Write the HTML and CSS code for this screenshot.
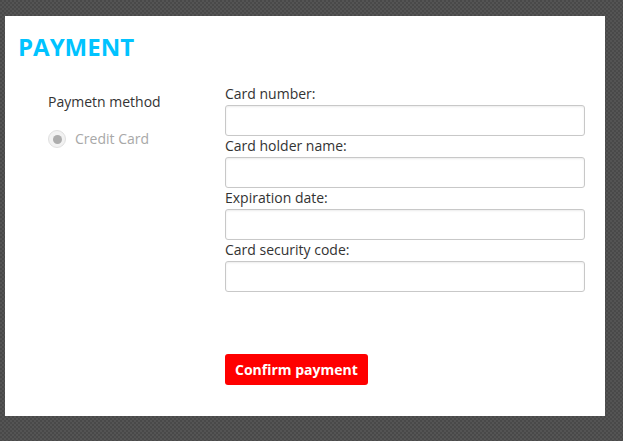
FILE: index.html
```html
<!DOCTYPE html>
<html>
<head>
<meta charset="utf-8">
<link rel="stylesheet" href="styles.css">
</head>
<body>
<div class="panel">
  <h1 class="title">PAYMENT</h1>
  <div class="content">
    <div class="method">
      <div class="method-label">Paymetn method</div>
      <label class="radio-row">
        <span class="radio"><span class="radio-dot"></span></span>
        <span class="radio-text">Credit Card</span>
      </label>
    </div>
    <div class="form">
      <label class="field-label">Card number:</label>
      <div class="input"></div>
      <label class="field-label">Card holder name:</label>
      <div class="input"></div>
      <label class="field-label">Expiration date:</label>
      <div class="input"></div>
      <label class="field-label">Card security code:</label>
      <div class="input"></div>
      <button class="confirm">Confirm payment</button>
    </div>
  </div>
</div>
</body>
</html>
```
FILE: styles.css
```css
html, body {
  margin: 0;
  padding: 0;
}
body {
  width: 623px;
  height: 441px;
  background-color: #4f4f4f;
  background-image: repeating-conic-gradient(#545454 0 25%, #494949 0 50%);
  background-size: 4px 4px;
  font-family: "Open Sans", "Noto Sans", sans-serif;
  padding: 16px 0 0 5px;
  box-sizing: border-box;
}
.panel {
  width: 600px;
  height: 400px;
  background: #fff;
  box-sizing: border-box;
  padding: 15px 0 0 13px;
}
.title {
  margin: 0;
  font-size: 24px;
  line-height: 32px;
  font-weight: 700;
  color: #00c3ff;
}
.content {
  display: flex;
  margin-top: 33px;
  margin-left: 2px;
}
.method {
  width: 205px;
  padding-left: 28px;
  box-sizing: border-box;
  margin-top: -33px;
  padding-top: 29px;
}
.method-label {
  font-size: 14px;
  line-height: 20px;
  color: #333;
}
.radio-row {
  display: flex;
  align-items: center;
  margin-top: 17px;
  gap: 9px;
}
.radio {
  width: 18px;
  height: 18px;
  border-radius: 50%;
  border: 1px solid #e0e0e0;
  background: #f2f2f2;
  box-sizing: border-box;
  display: flex;
  align-items: center;
  justify-content: center;
}
.radio-dot {
  width: 9px;
  height: 9px;
  border-radius: 50%;
  background: #adadad;
}
.radio-text {
  font-size: 14px;
  line-height: 20px;
  color: #a8a8a8;
}
.form {
  width: 360px;
  display: flex;
  flex-direction: column;
  margin-top: -12px;
}
.field-label {
  font-size: 14px;
  line-height: 20px;
  color: #333;
  margin-bottom: 1px;
}
.input {
  height: 31px;
  border: 1px solid #c8c8c8;
  border-radius: 3px;
  box-sizing: border-box;
  box-shadow: inset 0 1px 2px rgba(0,0,0,0.08);
}
.confirm {
  align-self: flex-start;
  margin-top: 62px;
  height: 31px;
  padding: 0 10px;
  border: none;
  border-radius: 3px;
  background: #ff0000;
  color: #fff;
  font-family: "Open Sans", "Noto Sans", sans-serif;
  font-weight: 700;
  font-size: 14px;
}
```
